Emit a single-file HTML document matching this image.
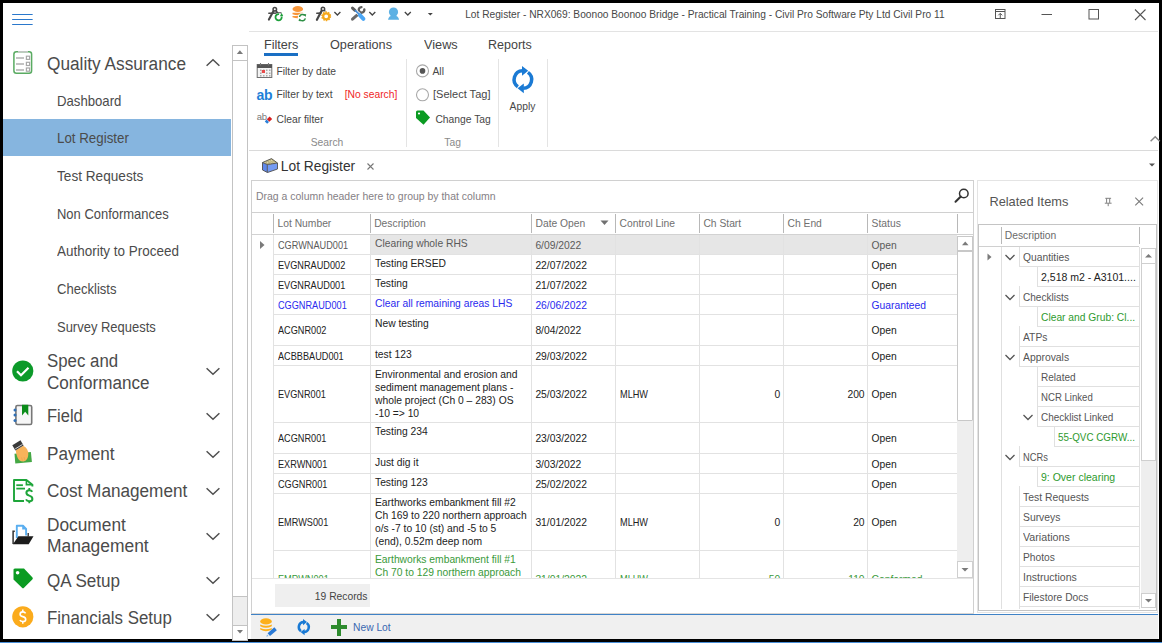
<!DOCTYPE html><html><head><meta charset="utf-8"><style>
*{box-sizing:border-box;margin:0;padding:0}
html,body{width:1162px;height:643px;overflow:hidden;background:#000;font-family:"Liberation Sans",sans-serif;position:relative}
.r{position:absolute;display:block}
.t{position:absolute;white-space:nowrap;line-height:1;}
.m{position:absolute;white-space:pre;}
</style></head><body>

<div class="r" style="left:3px;top:3px;width:1156px;height:636px;background:#fff;"></div>
<div class="r" style="left:0px;top:642px;width:1162px;height:1px;background:#4a90d9;"></div>
<div class="r" style="left:249px;top:31px;width:909px;height:1px;background:#e3e3e3;"></div>
<svg class="r" style="left:0px;top:0px;" width="1162" height="30" viewBox="0 0 1162 30">
<g stroke="#474747" fill="none" stroke-linecap="round">
<circle cx="274.8" cy="9.2" r="1.75" stroke-width="1.5"/>
<path d="M273.5 11 L268.9 19.6" stroke-width="2.1"/><path d="M276.2 11 L279.8 16.5" stroke-width="1.7"/><path d="M268.8 13.3 L281 13" stroke-width="1.4"/>
</g>
<circle cx="278.6" cy="17.2" r="4.3" fill="#fff"/>
<path d="M279.14 14.15 A3.1 3.1 0 1 0 281.59 16.4" stroke="#1ea03c" stroke-width="1.8" fill="none"/>
<path d="M279.9 16.2 L283.2 16 L281.7 13.1z" fill="#1ea03c"/>
<g fill="#f7963a"><ellipse cx="297.8" cy="9" rx="5.3" ry="3"/><path d="M292.5 12.8 H303.1 V14.3 Q297.8 16.3 292.5 14.3z"/><path d="M292.5 16 H303.1 V17.2 Q297.8 19.2 292.5 17.2z"/></g>
<circle cx="302.4" cy="17.6" r="4.6" fill="#fff"/>
<path d="M299.5 17 A3 3 0 0 1 304.8 15.6" stroke="#2d8f44" stroke-width="1.5" fill="none"/><path d="M305.3 18.4 A3 3 0 0 1 300 19.6" stroke="#2d8f44" stroke-width="1.5" fill="none"/>
<path d="M303.6 14 l2.6 0.3 l-0.6 2.6z" fill="#2d8f44"/><path d="M301.2 21.2 l-2.6 -0.3 l0.6 -2.6z" fill="#2d8f44"/>
<g stroke="#474747" fill="none" stroke-linecap="round">
<circle cx="323" cy="9" r="1.7" stroke-width="1.6"/>
<path d="M321.6 10.8 L316.9 19.8" stroke-width="2.2"/><path d="M324.5 10.8 L327 14" stroke-width="1.8"/><path d="M316.8 13.2 L321 13.1" stroke-width="1.6"/>
</g>
<circle cx="326.2" cy="16.3" r="5" fill="#fff"/>
<circle cx="326.2" cy="16.3" r="3" fill="none" stroke="#f5a81c" stroke-width="2.2"/>
<circle cx="326.2" cy="16.3" r="4.2" fill="none" stroke="#f5a81c" stroke-width="1.5" stroke-dasharray="1.5 1.14"/>
<path d="M334.4 12 l3 3 l3 -3" stroke="#444" stroke-width="1.3" fill="none"/>
<g stroke-linecap="round" fill="none">
<path d="M364.3 9.4 A2.8 2.8 0 1 1 361.4 7.1" stroke="#5e5e5e" stroke-width="2.4"/>
<path d="M360.2 12.4 L352.5 19.2" stroke="#6a6a6a" stroke-width="3"/>
<path d="M355.4 10.6 L360.2 15.2" stroke="#fff" stroke-width="3"/>
<path d="M352.5 8.1 L355 10.3" stroke="#5e5e5e" stroke-width="3"/>
<path d="M355.4 10.6 L359.6 14.6" stroke="#3f8ad8" stroke-width="1.5"/>
<path d="M359.9 15.1 L363.4 18.8" stroke="#4aa6f5" stroke-width="4"/>
</g>
<path d="M369.3 12 l3 3 l3 -3" stroke="#444" stroke-width="1.3" fill="none"/>
<circle cx="393.5" cy="12" r="4.6" fill="#5db1e4"/>
<path d="M388 19.8 Q388.5 15.5 393.5 15.5 Q398.5 15.5 399.1 19.8 Z" fill="#5db1e4"/>
<path d="M404.8 12 l3 3 l3 -3" stroke="#444" stroke-width="1.3" fill="none"/>
<path d="M427.8 12.9 h5 l-2.5 2.6z" fill="#444"/>
</svg>
<div class="t " style="left:465.20px;top:10.17px;font-size:10.2px;color:#474747;">Lot Register - NRX069: Boonoo Boonoo Bridge - Practical Training - Civil Pro Software Pty Ltd Civil Pro 11</div>
<svg class="r" style="left:990px;top:3px;" width="170" height="25" viewBox="0 0 170 25">
<rect x="5.5" y="6.5" width="9.5" height="9" fill="none" stroke="#555" stroke-width="1"/>
<path d="M5.5 8.5 h9.5" stroke="#555"/>
<path d="M10.25 15 v-4.5 M8.3 12.3 l1.95 -1.95 l1.95 1.95" stroke="#555" fill="none"/>
<path d="M51.5 11.5 h10.5" stroke="#555" stroke-width="1"/>
<rect x="99" y="6.5" width="9.5" height="9.5" fill="none" stroke="#555" stroke-width="1"/>
<path d="M145 6.5 l10.5 10.5 M155.5 6.5 l-10.5 10.5" stroke="#555" stroke-width="1.1"/>
</svg>
<svg class="r" style="left:10px;top:10px;" width="26" height="20" viewBox="0 0 26 20"><g stroke="#2a78cc" stroke-width="1.2" stroke-linecap="round"><path d="M2.6 4.5h19.6"/><path d="M2.6 9.5h19.6"/><path d="M2.6 14.5h19.6"/></g></svg>
<div class="r" style="left:3px;top:119px;width:228px;height:37px;background:#86b5df;"></div>
<div class="t " style="left:47.30px;top:55.80px;font-size:17.6px;color:#4b4b4b;transform:scaleX(0.9802);transform-origin:0 0;">Quality Assurance</div>
<div class="t " style="left:57.00px;top:94.40px;font-size:14.3px;color:#4b4b4b;transform:scaleX(0.9206);transform-origin:0 0;">Dashboard</div>
<div class="t " style="left:57.00px;top:131.20px;font-size:14.3px;color:#4b4b4b;transform:scaleX(0.9326);transform-origin:0 0;">Lot Register</div>
<div class="t " style="left:57.00px;top:169.00px;font-size:14.3px;color:#4b4b4b;transform:scaleX(0.9526);transform-origin:0 0;">Test Requests</div>
<div class="t " style="left:57.00px;top:206.60px;font-size:14.3px;color:#4b4b4b;transform:scaleX(0.9069);transform-origin:0 0;">Non Conformances</div>
<div class="t " style="left:57.00px;top:244.40px;font-size:14.3px;color:#4b4b4b;transform:scaleX(0.941);transform-origin:0 0;">Authority to Proceed</div>
<div class="t " style="left:57.00px;top:281.70px;font-size:14.3px;color:#4b4b4b;transform:scaleX(0.9132);transform-origin:0 0;">Checklists</div>
<div class="t " style="left:57.00px;top:320.30px;font-size:14.3px;color:#4b4b4b;transform:scaleX(0.9075);transform-origin:0 0;">Survey Requests</div>
<div class="t " style="left:47.30px;top:352.80px;font-size:17.6px;color:#4b4b4b;transform:scaleX(0.9562);transform-origin:0 0;">Spec and</div>
<div class="t " style="left:47.30px;top:374.50px;font-size:17.6px;color:#4b4b4b;transform:scaleX(0.9704);transform-origin:0 0;">Conformance</div>
<div class="t " style="left:47.30px;top:407.50px;font-size:17.6px;color:#4b4b4b;transform:scaleX(0.9386);transform-origin:0 0;">Field</div>
<div class="t " style="left:47.30px;top:446.10px;font-size:17.6px;color:#4b4b4b;transform:scaleX(0.9735);transform-origin:0 0;">Payment</div>
<div class="t " style="left:47.30px;top:483.00px;font-size:17.6px;color:#4b4b4b;transform:scaleX(0.9759);transform-origin:0 0;">Cost Management</div>
<div class="t " style="left:47.30px;top:517.40px;font-size:17.6px;color:#4b4b4b;transform:scaleX(0.9827);transform-origin:0 0;">Document</div>
<div class="t " style="left:47.30px;top:538.40px;font-size:17.6px;color:#4b4b4b;transform:scaleX(0.9902);transform-origin:0 0;">Management</div>
<div class="t " style="left:47.30px;top:572.60px;font-size:17.6px;color:#4b4b4b;transform:scaleX(0.9704);transform-origin:0 0;">QA Setup</div>
<div class="t " style="left:47.30px;top:609.90px;font-size:17.6px;color:#4b4b4b;transform:scaleX(0.9594);transform-origin:0 0;">Financials Setup</div>
<svg class="r" style="left:204px;top:56px;" width="20" height="12" viewBox="0 0 20 12"><path d="M2.6 9.8 l6.4 -6.1 l6.4 6.1" stroke="#505050" stroke-width="1.5" fill="none"/></svg>
<svg class="r" style="left:204px;top:365px;" width="20" height="12" viewBox="0 0 20 12"><path d="M2.6 3.2 l6.4 6.1 l6.4 -6.1" stroke="#505050" stroke-width="1.5" fill="none"/></svg>
<svg class="r" style="left:204px;top:410px;" width="20" height="12" viewBox="0 0 20 12"><path d="M2.6 3.2 l6.4 6.1 l6.4 -6.1" stroke="#505050" stroke-width="1.5" fill="none"/></svg>
<svg class="r" style="left:204px;top:448px;" width="20" height="12" viewBox="0 0 20 12"><path d="M2.6 3.2 l6.4 6.1 l6.4 -6.1" stroke="#505050" stroke-width="1.5" fill="none"/></svg>
<svg class="r" style="left:204px;top:485px;" width="20" height="12" viewBox="0 0 20 12"><path d="M2.6 3.2 l6.4 6.1 l6.4 -6.1" stroke="#505050" stroke-width="1.5" fill="none"/></svg>
<svg class="r" style="left:204px;top:530px;" width="20" height="12" viewBox="0 0 20 12"><path d="M2.6 3.2 l6.4 6.1 l6.4 -6.1" stroke="#505050" stroke-width="1.5" fill="none"/></svg>
<svg class="r" style="left:204px;top:574px;" width="20" height="12" viewBox="0 0 20 12"><path d="M2.6 3.2 l6.4 6.1 l6.4 -6.1" stroke="#505050" stroke-width="1.5" fill="none"/></svg>
<svg class="r" style="left:204px;top:611px;" width="20" height="12" viewBox="0 0 20 12"><path d="M2.6 3.2 l6.4 6.1 l6.4 -6.1" stroke="#505050" stroke-width="1.5" fill="none"/></svg>
<svg class="r" style="left:10px;top:48px;" width="26" height="30" viewBox="0 0 26 30"><rect x="3.9" y="3.8" width="17.7" height="21.5" rx="2.5" fill="#fff" stroke="#5aab62" stroke-width="1.5"/>
<path d="M8 3.8h10" stroke="#c8c8c8" stroke-width="1.5"/>
<g stroke="#bdbdbd" stroke-width="1.8"><path d="M6 10h8"/><path d="M6 16h8"/><path d="M6 22h8"/></g>
<g stroke="#a8a8a8" stroke-width="1.2" fill="#fff"><rect x="16.4" y="8.2" width="3.2" height="3.2"/><rect x="16.4" y="14.3" width="3.2" height="3.2"/><rect x="16.4" y="20" width="3.2" height="3.2"/></g></svg>
<svg class="r" style="left:10px;top:358px;" width="26" height="26" viewBox="0 0 26 26"><circle cx="12.8" cy="13" r="10.6" fill="#0c9a2a"/><path d="M7 13.3 l4 4 l7.5 -7.5" stroke="#fff" stroke-width="2.2" fill="none"/></svg>
<svg class="r" style="left:10px;top:402px;" width="26" height="26" viewBox="0 0 26 26"><rect x="5.9" y="3.5" width="15.8" height="19" rx="1.5" fill="#f6f6f6" stroke="#777" stroke-width="1.6"/>
<path d="M12 2.8 h6.3 v10.6 l-3.15 -3.6 l-3.15 3.6z" fill="#0b8c1a"/>
<g fill="#2f6fb5"><circle cx="5" cy="8" r="1.5"/><circle cx="5" cy="13" r="1.5"/><circle cx="5" cy="18.5" r="1.5"/></g></svg>
<svg class="r" style="left:10px;top:438px;" width="26" height="28" viewBox="0 0 26 28"><path d="M4.5 15.7 L20.9 13.9 L21.9 23.9 L5.3 25.5z" fill="#45a845"/>
<path d="M5.8 12.3 L13.2 7.8 Q18.5 10.5 18.3 16.5 Q18 22.5 13.5 23.4 Q9 23.5 7.5 19.5 Q6 16 5.8 12.3z" fill="#f7b35a"/>
<path d="M11.5 19.5 l1 3 M14 19 l1 3.5" stroke="#e8a048" stroke-width="0.6"/>
<path d="M2.3 7.3 L10.5 2.3 L13.6 7.6 L5.4 12.6z" fill="#3a3a3a"/>
<path d="M5.2 10.9 L12.6 6.4" stroke="#e6e6e6" stroke-width="0.9"/></svg>
<svg class="r" style="left:10px;top:476px;" width="26" height="28" viewBox="0 0 26 28"><path d="M14 25 H4 V4 H16.4 L22.4 8.8 V10.5" stroke="#1ea53a" stroke-width="1.9" fill="none" stroke-linejoin="round"/>
<path d="M16.4 4.5 V8.6 H22" stroke="#1ea53a" stroke-width="1.6" fill="none"/>
<g stroke="#1ea53a" stroke-width="1.8"><path d="M6.3 9.2h6.6"/><path d="M6.3 12.6h8.7"/></g>
<path d="M22.3 15.8 Q21.3 14.2 19.3 14.2 Q16.4 14.2 16.4 16.8 Q16.4 18.9 19.3 19.6 Q22.4 20.4 22.4 22.9 Q22.4 25.2 19.3 25.2 Q16.8 25.2 16 23.4" stroke="#1ea53a" stroke-width="2" fill="none"/>
<path d="M19.3 12 v2.4 M19.3 25 v2.2" stroke="#1ea53a" stroke-width="1.8"/></svg>
<svg class="r" style="left:8px;top:520px;" width="30" height="28" viewBox="0 0 30 28"><path d="M8.8 18 V5.7 H15 L18.1 8.8 V15.5" stroke="#5aaef0" stroke-width="1.9" fill="#fff" stroke-linejoin="round"/>
<path d="M15 5.7 V8.8 H18.1" stroke="#5aaef0" stroke-width="1.6" fill="#5aaef0"/>
<path d="M5.1 24 V11.2 H6.8" stroke="#333" stroke-width="1.5" fill="none"/>
<path d="M20.2 13 V16.5" stroke="#333" stroke-width="1.4"/>
<path d="M10.4 16.2 H25.5 L20.7 24.2 H4.9z" fill="#1c1c1c"/></svg>
<svg class="r" style="left:10px;top:566px;" width="26" height="26" viewBox="0 0 26 26"><path d="M3.5 4.5 Q3 2.5 5 2.5 H14 L22.5 11.5 Q23.3 12.5 22.3 13.5 L14 21.8 Q13 22.8 12 21.8 L3.5 13.5z" fill="#0b9b22"/>
<circle cx="7.6" cy="6.8" r="1.8" fill="#fff"/></svg>
<svg class="r" style="left:10px;top:604px;" width="26" height="26" viewBox="0 0 26 26"><circle cx="12.8" cy="12.8" r="10.6" fill="#fbab1c"/><path d="M15.6 9.4 Q14.8 7.9 12.8 7.9 Q10.1 7.9 10.1 10.2 Q10.1 12.1 12.8 12.6 Q15.7 13.2 15.7 15.4 Q15.7 17.5 12.8 17.5 Q10.6 17.5 9.9 16" stroke="#fff" stroke-width="1.6" fill="none"/><path d="M12.8 5.6 v2.3 M12.8 17.4 v2.3" stroke="#fff" stroke-width="1.5"/></svg>
<div class="r" style="left:232px;top:45px;width:16px;height:594px;background:#fff;border-left:1px solid #c3c3c3;border-right:1px solid #c3c3c3;"></div>
<div class="r" style="left:232px;top:45px;width:16px;height:16px;background:#fff;border:1px solid #c3c3c3;"></div>
<svg class="r" style="left:232px;top:45px;" width="16" height="16" viewBox="0 0 16 16"><path d="M4.8 9 h6.2 l-3.1 -3.7z" fill="#7a7a7a"/></svg>
<div class="r" style="left:232px;top:60px;width:16px;height:537px;background:#fff;border:1px solid #c3c3c3;"></div>
<div class="r" style="left:233px;top:597px;width:14px;height:28px;background:#eeeeee;"></div>
<div class="r" style="left:232px;top:625px;width:16px;height:16px;background:#fff;border:1px solid #c3c3c3;"></div>
<svg class="r" style="left:232px;top:625px;" width="16" height="14" viewBox="0 0 16 14"><path d="M5 5 h6 l-3 3.5z" fill="#7a7a7a"/></svg>
<div class="t " style="left:264.00px;top:38.40px;font-size:13.7px;color:#444;transform:scaleX(0.9231);transform-origin:0 0;">Filters</div>
<div class="r" style="left:264px;top:53px;width:34px;height:3px;background:#1a6fc4;"></div>
<div class="t " style="left:329.60px;top:38.40px;font-size:13.7px;color:#444;transform:scaleX(0.9258);transform-origin:0 0;">Operations</div>
<div class="t " style="left:423.50px;top:38.40px;font-size:13.7px;color:#444;transform:scaleX(0.9293);transform-origin:0 0;">Views</div>
<div class="t " style="left:488.20px;top:38.40px;font-size:13.7px;color:#444;transform:scaleX(0.9137);transform-origin:0 0;">Reports</div>
<div class="r" style="left:249px;top:150px;width:909px;height:1px;background:#dadada;"></div>
<div class="r" style="left:406px;top:59px;width:1px;height:88px;background:#e4e4e4;"></div>
<div class="r" style="left:498px;top:59px;width:1px;height:88px;background:#e4e4e4;"></div>
<div class="r" style="left:547px;top:59px;width:1px;height:88px;background:#e4e4e4;"></div>
<div class="t " style="left:276.50px;top:66.58px;font-size:10.3px;color:#474747;">Filter by date</div>
<div class="t " style="left:276.50px;top:90.48px;font-size:10.3px;color:#474747;">Filter by text</div>
<div class="t " style="left:344.70px;top:90.48px;font-size:10.3px;color:#f02626;">[No search]</div>
<div class="t " style="left:276.50px;top:114.58px;font-size:10.3px;color:#474747;">Clear filter</div>
<div class="t " style="left:177.00px;width:300px;top:137.78px;font-size:10.3px;color:#8a8a8a;text-align:center;">Search</div>
<div class="t " style="left:432.50px;top:66.58px;font-size:10.3px;color:#474747;">All</div>
<div class="t " style="left:432.50px;top:90.48px;font-size:10.3px;color:#474747;transform:scaleX(1.0723);transform-origin:0 0;">[Select Tag]</div>
<div class="t " style="left:435.40px;top:114.58px;font-size:10.3px;color:#474747;">Change Tag</div>
<div class="t " style="left:302.60px;width:300px;top:137.78px;font-size:10.3px;color:#8a8a8a;text-align:center;">Tag</div>
<div class="t " style="left:372.50px;width:300px;top:101.58px;font-size:10.3px;color:#474747;text-align:center;">Apply</div>
<svg class="r" style="left:256px;top:62px;" width="18" height="18" viewBox="0 0 18 18"><rect x="1.2" y="2.5" width="14.6" height="13" fill="#f3f3f3" stroke="#707070" stroke-width="1"/>
<rect x="1" y="2.5" width="15" height="3.5" fill="#555"/>
<g fill="#aaa"><rect x="4" y="7.5" width="1.5" height="1.5"/><rect x="7" y="7.5" width="1.5" height="1.5"/><rect x="10" y="7.5" width="1.5" height="1.5"/><rect x="13" y="7.5" width="1.5" height="1.5"/>
<rect x="4" y="10.5" width="1.5" height="1.5"/><rect x="10" y="10.5" width="1.5" height="1.5"/><rect x="13" y="10.5" width="1.5" height="1.5"/>
<rect x="4" y="13" width="1.5" height="1.5"/><rect x="7" y="13" width="1.5" height="1.5"/><rect x="10" y="13" width="1.5" height="1.5"/><rect x="13" y="13" width="1.5" height="1.5"/></g>
<rect x="5.8" y="8" width="3.2" height="3" fill="#e84a4a"/>
<g stroke="#777" stroke-width="1.1" fill="none"><path d="M4.5 1 v2.5"/><path d="M12.5 1 v2.5"/></g></svg>
<div class="t " style="left:256.50px;top:87.95px;font-size:14px;color:#1e7fd8;font-weight:bold;letter-spacing:-0.3px;">ab</div>
<div class="t " style="left:256.80px;top:111.96px;font-size:9.5px;color:#777;letter-spacing:-0.3px;">ab</div>
<svg class="r" style="left:262px;top:113px;" width="12" height="12" viewBox="0 0 12 12"><path d="M4.8 6.2 L7.6 3.4 L10.2 6 L7.4 8.8z" fill="#d61f1f"/><path d="M2.8 8.4 L4.6 6.6 L7 9 L5.2 10.8z" fill="#2a7fd8"/></svg>
<svg class="r" style="left:414px;top:62px;" width="18" height="70" viewBox="0 0 18 70"><circle cx="8.5" cy="8.9" r="6" fill="#fff" stroke="#a8a8a8" stroke-width="1.1"/><circle cx="8.5" cy="8.9" r="2.8" fill="#555"/>
<circle cx="8.5" cy="32.8" r="6" fill="#fff" stroke="#a8a8a8" stroke-width="1.1"/>
<path d="M2 50 Q2 48.5 3.5 48.5 H9.5 L16 55.5 L9.5 62.8 L2 56z" fill="#0b9b22"/><circle cx="5" cy="51.5" r="1.1" fill="#fff"/></svg>
<svg class="r" style="left:510px;top:64px;" width="26" height="32" viewBox="0 0 26 32"><g stroke="#1a7ad4" stroke-width="3.5" fill="none">
<path d="M7.88 22.77 A8.75 8.75 0 0 1 12.6 6.85"/><path d="M17.92 8.43 A8.75 8.75 0 0 1 13.2 24.35"/></g>
<path d="M12 2 L18.2 6.85 L12 11.7z" fill="#1a7ad4"/><path d="M13.8 19.5 L7.6 24.35 L13.8 29.2z" fill="#1a7ad4"/></svg>
<svg class="r" style="left:1148px;top:134px;" width="14" height="10" viewBox="0 0 14 10"><path d="M2.6 7.2 l4.6 -4.4 l4.6 4.4" stroke="#888" stroke-width="1.5" fill="none"/></svg>
<svg class="r" style="left:260px;top:155px;" width="20" height="20" viewBox="0 0 20 20"><path d="M2.5 7.5 L7.3 9.5 L7.5 17.5 L2.5 15z" fill="#6088ea"/>
<path d="M7.3 9.5 L17.5 8 L17.5 14 L7.5 17.5z" fill="#749bf3"/>
<path d="M2.5 7.5 L11.5 3.6 L17.5 8 L7.3 9.5z" fill="#d4ca94"/>
<g fill="#e8e0b0" stroke="#8a845e" stroke-width="0.5"><ellipse cx="7.6" cy="7.3" rx="1.3" ry="1"/><ellipse cx="11.6" cy="5.4" rx="1.3" ry="1"/><ellipse cx="14" cy="7.8" rx="1.3" ry="1"/><ellipse cx="10.3" cy="8.6" rx="1.2" ry="0.8"/></g>
<path d="M2.5 7.5 L11.5 3.6 L17.5 8 V14 L7.5 17.5 L2.5 15z M7.3 9.5 L17.5 8 M7.3 9.5 L2.5 7.5 M7.3 9.5 V17.5" stroke="#4e4e4e" stroke-width="0.9" fill="none" stroke-linejoin="round"/></svg>
<div class="t " style="left:280.80px;top:160.32px;font-size:13.8px;color:#333;">Lot Register</div>
<svg class="r" style="left:365px;top:162px;" width="12" height="10" viewBox="0 0 12 10"><path d="M2.5 1.5 l6 6 M8.5 1.5 l-6 6" stroke="#777" stroke-width="1.1"/></svg>
<svg class="r" style="left:1146px;top:160px;" width="12" height="10" viewBox="0 0 12 10"><path d="M3 3.5 h6 l-3 3z" fill="#555"/></svg>
<div class="r" style="left:251px;top:180px;width:723px;height:435px;background:#fff;border-left:1px solid #d0d0d0;border-top:1px solid #d0d0d0;border-right:1px solid #d0d0d0;"></div>
<div class="t " style="left:255.80px;top:192.08px;font-size:10.3px;color:#858085;transform:scaleX(1.0156);transform-origin:0 0;">Drag a column header here to group by that column</div>
<svg class="r" style="left:952px;top:186px;" width="20" height="20" viewBox="0 0 20 20"><circle cx="11.8" cy="7.5" r="4.3" stroke="#333" stroke-width="1.5" fill="none"/><path d="M8.8 10.5 L3.5 15.8" stroke="#333" stroke-width="2" stroke-linecap="round"/></svg>
<div class="r" style="left:252px;top:212px;width:721px;height:1px;background:#d0d0d0;"></div>
<div class="r" style="left:252px;top:234px;width:721px;height:1px;background:#d2d2d2;"></div>
<div class="r" style="left:273px;top:214px;width:1px;height:19px;background:#b8b8b8;"></div>
<div class="r" style="left:370px;top:214px;width:1px;height:19px;background:#b8b8b8;"></div>
<div class="r" style="left:531px;top:214px;width:1px;height:19px;background:#b8b8b8;"></div>
<div class="r" style="left:615px;top:214px;width:1px;height:19px;background:#b8b8b8;"></div>
<div class="r" style="left:699px;top:214px;width:1px;height:19px;background:#b8b8b8;"></div>
<div class="r" style="left:783px;top:214px;width:1px;height:19px;background:#b8b8b8;"></div>
<div class="r" style="left:867px;top:214px;width:1px;height:19px;background:#b8b8b8;"></div>
<div class="r" style="left:957px;top:214px;width:1px;height:19px;background:#b8b8b8;"></div>
<div class="t " style="left:277.50px;top:219.18px;font-size:10.3px;color:#707070;">Lot Number</div>
<div class="t " style="left:374.20px;top:219.18px;font-size:10.3px;color:#707070;">Description</div>
<div class="t " style="left:535.50px;top:219.18px;font-size:10.3px;color:#707070;">Date Open</div>
<svg class="r" style="left:598px;top:219px;" width="12" height="8" viewBox="0 0 12 8"><path d="M2.5 1.5 h8 l-4 4.5z" fill="#707070"/></svg>
<div class="t " style="left:619.50px;top:219.18px;font-size:10.3px;color:#707070;">Control Line</div>
<div class="t " style="left:703.40px;top:219.18px;font-size:10.3px;color:#707070;">Ch Start</div>
<div class="t " style="left:787.50px;top:219.18px;font-size:10.3px;color:#707070;">Ch End</div>
<div class="t " style="left:871.60px;top:219.18px;font-size:10.3px;color:#707070;">Status</div>
<div class="r" style="left:252px;top:235px;width:705px;height:343px;overflow:hidden">
<div class="r" style="left:118px;top:0px;width:587px;height:19px;background:#e6e6e6;"></div>
<div class="r" style="left:21px;top:19px;width:684px;height:1px;background:#e2e2e2;"></div>
<div class="t " style="left:25.60px;top:5.78px;font-size:10.3px;color:#5a5a5a;transform:scaleX(0.89);transform-origin:0 0;">CGRWNAUD001</div>
<div class="t " style="left:123.00px;top:3.58px;font-size:10.3px;color:#5a5a5a;">Clearing whole RHS</div>
<div class="t " style="left:283.40px;top:5.78px;font-size:10.3px;color:#5a5a5a;">6/09/2022</div>
<div class="t " style="left:619.60px;top:5.78px;font-size:10.3px;color:#5a5a5a;">Open</div>
<div class="r" style="left:21px;top:39px;width:684px;height:1px;background:#e2e2e2;"></div>
<div class="t " style="left:25.60px;top:25.78px;font-size:10.3px;color:#222;transform:scaleX(0.89);transform-origin:0 0;">EVGNRAUD002</div>
<div class="t " style="left:123.00px;top:23.58px;font-size:10.3px;color:#222;">Testing ERSED</div>
<div class="t " style="left:283.40px;top:25.78px;font-size:10.3px;color:#222;">22/07/2022</div>
<div class="t " style="left:619.60px;top:25.78px;font-size:10.3px;color:#222;">Open</div>
<div class="r" style="left:21px;top:59px;width:684px;height:1px;background:#e2e2e2;"></div>
<div class="t " style="left:25.60px;top:45.78px;font-size:10.3px;color:#222;transform:scaleX(0.89);transform-origin:0 0;">EVGNRAUD001</div>
<div class="t " style="left:123.00px;top:43.58px;font-size:10.3px;color:#222;">Testing</div>
<div class="t " style="left:283.40px;top:45.78px;font-size:10.3px;color:#222;">21/07/2022</div>
<div class="t " style="left:619.60px;top:45.78px;font-size:10.3px;color:#222;">Open</div>
<div class="r" style="left:21px;top:79px;width:684px;height:1px;background:#e2e2e2;"></div>
<div class="t " style="left:25.60px;top:65.78px;font-size:10.3px;color:#2a2aee;transform:scaleX(0.89);transform-origin:0 0;">CGGNRAUD001</div>
<div class="t " style="left:123.00px;top:63.58px;font-size:10.3px;color:#2a2aee;">Clear all remaining areas LHS</div>
<div class="t " style="left:283.40px;top:65.78px;font-size:10.3px;color:#2a2aee;">26/06/2022</div>
<div class="t " style="left:619.60px;top:65.78px;font-size:10.3px;color:#2a2aee;">Guaranteed</div>
<div class="r" style="left:21px;top:110px;width:684px;height:1px;background:#e2e2e2;"></div>
<div class="t " style="left:25.60px;top:91.28px;font-size:10.3px;color:#222;transform:scaleX(0.89);transform-origin:0 0;">ACGNR002</div>
<div class="t " style="left:123.00px;top:83.58px;font-size:10.3px;color:#222;">New testing</div>
<div class="t " style="left:283.40px;top:91.28px;font-size:10.3px;color:#222;">8/04/2022</div>
<div class="t " style="left:619.60px;top:91.28px;font-size:10.3px;color:#222;">Open</div>
<div class="r" style="left:21px;top:130px;width:684px;height:1px;background:#e2e2e2;"></div>
<div class="t " style="left:25.60px;top:116.78px;font-size:10.3px;color:#222;transform:scaleX(0.89);transform-origin:0 0;">ACBBBAUD001</div>
<div class="t " style="left:123.00px;top:114.58px;font-size:10.3px;color:#222;">test 123</div>
<div class="t " style="left:283.40px;top:116.78px;font-size:10.3px;color:#222;">29/03/2022</div>
<div class="t " style="left:619.60px;top:116.78px;font-size:10.3px;color:#222;">Open</div>
<div class="r" style="left:21px;top:187px;width:684px;height:1px;background:#e2e2e2;"></div>
<div class="t " style="left:25.60px;top:155.28px;font-size:10.3px;color:#222;transform:scaleX(0.89);transform-origin:0 0;">EVGNR001</div>
<div class="t " style="left:123.00px;top:134.58px;font-size:10.3px;color:#222;">Environmental and erosion and</div>
<div class="t " style="left:123.00px;top:147.58px;font-size:10.3px;color:#222;">sediment management plans -</div>
<div class="t " style="left:123.00px;top:160.58px;font-size:10.3px;color:#222;">whole project (Ch 0 – 283) OS</div>
<div class="t " style="left:123.00px;top:173.58px;font-size:10.3px;color:#222;">-10 =&gt; 10</div>
<div class="t " style="left:283.40px;top:155.28px;font-size:10.3px;color:#222;">25/03/2022</div>
<div class="t " style="left:367.50px;top:155.28px;font-size:10.3px;color:#222;transform:scaleX(0.89);transform-origin:0 0;">MLHW</div>
<div class="t " style="left:228.30px;width:300px;top:155.28px;font-size:10.3px;color:#222;text-align:right;">0</div>
<div class="t " style="left:312.60px;width:300px;top:155.28px;font-size:10.3px;color:#222;text-align:right;">200</div>
<div class="t " style="left:619.60px;top:155.28px;font-size:10.3px;color:#222;">Open</div>
<div class="r" style="left:21px;top:218px;width:684px;height:1px;background:#e2e2e2;"></div>
<div class="t " style="left:25.60px;top:199.28px;font-size:10.3px;color:#222;transform:scaleX(0.89);transform-origin:0 0;">ACGNR001</div>
<div class="t " style="left:123.00px;top:191.58px;font-size:10.3px;color:#222;">Testing 234</div>
<div class="t " style="left:283.40px;top:199.28px;font-size:10.3px;color:#222;">23/03/2022</div>
<div class="t " style="left:619.60px;top:199.28px;font-size:10.3px;color:#222;">Open</div>
<div class="r" style="left:21px;top:238px;width:684px;height:1px;background:#e2e2e2;"></div>
<div class="t " style="left:25.60px;top:224.78px;font-size:10.3px;color:#222;transform:scaleX(0.89);transform-origin:0 0;">EXRWN001</div>
<div class="t " style="left:123.00px;top:222.58px;font-size:10.3px;color:#222;">Just dig it</div>
<div class="t " style="left:283.40px;top:224.78px;font-size:10.3px;color:#222;">3/03/2022</div>
<div class="t " style="left:619.60px;top:224.78px;font-size:10.3px;color:#222;">Open</div>
<div class="r" style="left:21px;top:258px;width:684px;height:1px;background:#e2e2e2;"></div>
<div class="t " style="left:25.60px;top:244.78px;font-size:10.3px;color:#222;transform:scaleX(0.89);transform-origin:0 0;">CGGNR001</div>
<div class="t " style="left:123.00px;top:242.58px;font-size:10.3px;color:#222;">Testing 123</div>
<div class="t " style="left:283.40px;top:244.78px;font-size:10.3px;color:#222;">25/02/2022</div>
<div class="t " style="left:619.60px;top:244.78px;font-size:10.3px;color:#222;">Open</div>
<div class="r" style="left:21px;top:315px;width:684px;height:1px;background:#e2e2e2;"></div>
<div class="t " style="left:25.60px;top:283.28px;font-size:10.3px;color:#222;transform:scaleX(0.89);transform-origin:0 0;">EMRWS001</div>
<div class="t " style="left:123.00px;top:262.58px;font-size:10.3px;color:#222;">Earthworks embankment fill #2</div>
<div class="t " style="left:123.00px;top:275.58px;font-size:10.3px;color:#222;">Ch 169 to 220 northern approach</div>
<div class="t " style="left:123.00px;top:288.58px;font-size:10.3px;color:#222;">o/s -7 to 10 (st) and -5 to 5</div>
<div class="t " style="left:123.00px;top:301.58px;font-size:10.3px;color:#222;">(end), 0.52m deep nom</div>
<div class="t " style="left:283.40px;top:283.28px;font-size:10.3px;color:#222;">31/01/2022</div>
<div class="t " style="left:367.50px;top:283.28px;font-size:10.3px;color:#222;transform:scaleX(0.89);transform-origin:0 0;">MLHW</div>
<div class="t " style="left:228.30px;width:300px;top:283.28px;font-size:10.3px;color:#222;text-align:right;">0</div>
<div class="t " style="left:312.60px;width:300px;top:283.28px;font-size:10.3px;color:#222;text-align:right;">20</div>
<div class="t " style="left:619.60px;top:283.28px;font-size:10.3px;color:#222;">Open</div>
<div class="r" style="left:21px;top:372px;width:684px;height:1px;background:#e2e2e2;"></div>
<div class="t " style="left:25.60px;top:340.28px;font-size:10.3px;color:#3a9a3a;transform:scaleX(0.89);transform-origin:0 0;">EMRWN001</div>
<div class="t " style="left:123.00px;top:319.58px;font-size:10.3px;color:#3a9a3a;">Earthworks embankment fill #1</div>
<div class="t " style="left:123.00px;top:332.58px;font-size:10.3px;color:#3a9a3a;">Ch 70 to 129 northern approach</div>
<div class="t " style="left:123.00px;top:345.58px;font-size:10.3px;color:#3a9a3a;">x</div>
<div class="t " style="left:123.00px;top:358.58px;font-size:10.3px;color:#3a9a3a;">x</div>
<div class="t " style="left:283.40px;top:340.28px;font-size:10.3px;color:#3a9a3a;">31/01/2022</div>
<div class="t " style="left:367.50px;top:340.28px;font-size:10.3px;color:#3a9a3a;transform:scaleX(0.89);transform-origin:0 0;">MLHW</div>
<div class="t " style="left:228.30px;width:300px;top:340.28px;font-size:10.3px;color:#3a9a3a;text-align:right;">50</div>
<div class="t " style="left:312.60px;width:300px;top:340.28px;font-size:10.3px;color:#3a9a3a;text-align:right;">110</div>
<div class="t " style="left:619.60px;top:340.28px;font-size:10.3px;color:#3a9a3a;">Conformed</div>
<div class="r" style="left:21px;top:0px;width:1px;height:343px;background:#e2e2e2;"></div>
<div class="r" style="left:118px;top:0px;width:1px;height:343px;background:#e2e2e2;"></div>
<div class="r" style="left:279px;top:0px;width:1px;height:343px;background:#e2e2e2;"></div>
<div class="r" style="left:363px;top:0px;width:1px;height:343px;background:#e2e2e2;"></div>
<div class="r" style="left:447px;top:0px;width:1px;height:343px;background:#e2e2e2;"></div>
<div class="r" style="left:531px;top:0px;width:1px;height:343px;background:#e2e2e2;"></div>
<div class="r" style="left:615px;top:0px;width:1px;height:343px;background:#e2e2e2;"></div>
<svg class="r" style="left:6px;top:4px;" width="10" height="12" viewBox="0 0 10 12"><path d="M2 2 l4.5 4 l-4.5 4z" fill="#7a7a7a"/></svg>
</div>
<div class="r" style="left:957px;top:236px;width:16px;height:342px;background:#eeeeee;"></div>
<div class="r" style="left:957px;top:236px;width:16px;height:185px;background:#fff;border:1px solid #c8c8c8;border-radius:1px;"></div>
<div class="r" style="left:957px;top:236px;width:16px;height:16px;background:#fff;border:1px solid #c8c8c8;border-bottom:2px solid #c8c8c8;"></div>
<svg class="r" style="left:957px;top:236px;" width="16" height="17" viewBox="0 0 16 17"><path d="M5 9.2 h6.5 l-3.25 -3.6z" fill="#7a7a7a"/></svg>
<div class="r" style="left:957px;top:561px;width:16px;height:17px;background:#fff;border:1px solid #cfcfcf;"></div>
<svg class="r" style="left:957px;top:561px;" width="16" height="17" viewBox="0 0 16 17"><path d="M4.5 7 h7 l-3.5 3.5z" fill="#7a7a7a"/></svg>
<div class="r" style="left:252px;top:578px;width:721px;height:1px;background:#e4e4e4;"></div>
<div class="r" style="left:275px;top:584px;width:95px;height:23px;background:#efefef;"></div>
<div class="t " style="left:67.50px;width:300px;top:591.68px;font-size:10.3px;color:#444;text-align:right;">19 Records</div>
<div class="r" style="left:977px;top:180px;width:181px;height:433px;background:#fff;border:1px solid #e4e4e4;"></div>
<div class="t " style="left:989.40px;top:196.46px;font-size:12.8px;color:#555;">Related Items</div>
<svg class="r" style="left:1100px;top:194px;" width="16" height="16" viewBox="0 0 16 16"><path d="M5.3 4.3 h5.8 M6.6 4.3 v4.6 M9.7 4.3 v4.6 M4.8 9.2 h6.8 M8.2 9.2 v3" stroke="#808080" stroke-width="1" fill="none"/></svg>
<svg class="r" style="left:1132px;top:196px;" width="14" height="12" viewBox="0 0 14 12"><path d="M3.3 1.6 l7.8 7.8 M11.1 1.6 l-7.8 7.8" stroke="#7a7a7a" stroke-width="1.1"/></svg>
<div class="r" style="left:978px;top:224px;width:179px;height:387px;background:#fff;border:1px solid #c4c4c4;"></div>
<div class="r" style="left:979px;top:246px;width:160px;height:1px;background:#d0d0d0;"></div>
<div class="r" style="left:1001px;top:227px;width:1px;height:17px;background:#b8b8b8;"></div>
<div class="r" style="left:1139px;top:227px;width:1px;height:17px;background:#b8b8b8;"></div>
<div class="t " style="left:1004.80px;top:231.38px;font-size:10.3px;color:#6a6a6a;">Description</div>
<div class="r" style="left:979px;top:247px;width:162px;height:362px;overflow:hidden">
<div class="r" style="left:22px;top:0px;width:1px;height:362px;background:#e0e0e0;"></div>
<div class="r" style="left:40px;top:-1px;width:1px;height:20px;background:#e0e0e0;"></div>
<div class="r" style="left:40px;top:19px;width:120px;height:1px;background:#e0e0e0;"></div>
<div class="t " style="left:44.00px;top:5.58px;font-size:10.3px;color:#555;transform:scaleX(0.9984);transform-origin:0 0;">Quantities</div>
<svg class="r" style="left:25px;top:5px;" width="12" height="10" viewBox="0 0 12 10"><path d="M1.5 3 l4.5 4.5 l4.5 -4.5" stroke="#555" stroke-width="1.3" fill="none"/></svg>
<div class="r" style="left:58px;top:19px;width:1px;height:20px;background:#e0e0e0;"></div>
<div class="r" style="left:58px;top:39px;width:102px;height:1px;background:#e0e0e0;"></div>
<div class="t " style="left:62.00px;top:25.58px;font-size:10.3px;color:#222;transform:scaleX(1.0223);transform-origin:0 0;">2,518 m2 - A3101....</div>
<div class="r" style="left:40px;top:39px;width:1px;height:20px;background:#e0e0e0;"></div>
<div class="r" style="left:40px;top:59px;width:120px;height:1px;background:#e0e0e0;"></div>
<div class="t " style="left:44.00px;top:45.58px;font-size:10.3px;color:#555;transform:scaleX(0.9761);transform-origin:0 0;">Checklists</div>
<svg class="r" style="left:25px;top:45px;" width="12" height="10" viewBox="0 0 12 10"><path d="M1.5 3 l4.5 4.5 l4.5 -4.5" stroke="#555" stroke-width="1.3" fill="none"/></svg>
<div class="r" style="left:58px;top:59px;width:1px;height:20px;background:#e0e0e0;"></div>
<div class="r" style="left:58px;top:79px;width:102px;height:1px;background:#e0e0e0;"></div>
<div class="t " style="left:62.00px;top:65.58px;font-size:10.3px;color:#2e9a2e;transform:scaleX(0.9964);transform-origin:0 0;">Clear and Grub: Cl...</div>
<div class="r" style="left:40px;top:79px;width:1px;height:20px;background:#e0e0e0;"></div>
<div class="r" style="left:40px;top:99px;width:120px;height:1px;background:#e0e0e0;"></div>
<div class="t " style="left:44.00px;top:85.58px;font-size:10.3px;color:#555;transform:scaleX(0.9991);transform-origin:0 0;">ATPs</div>
<div class="r" style="left:40px;top:99px;width:1px;height:20px;background:#e0e0e0;"></div>
<div class="r" style="left:40px;top:119px;width:120px;height:1px;background:#e0e0e0;"></div>
<div class="t " style="left:44.00px;top:105.58px;font-size:10.3px;color:#555;transform:scaleX(1.0066);transform-origin:0 0;">Approvals</div>
<svg class="r" style="left:25px;top:105px;" width="12" height="10" viewBox="0 0 12 10"><path d="M1.5 3 l4.5 4.5 l4.5 -4.5" stroke="#555" stroke-width="1.3" fill="none"/></svg>
<div class="r" style="left:58px;top:119px;width:1px;height:20px;background:#e0e0e0;"></div>
<div class="r" style="left:58px;top:139px;width:102px;height:1px;background:#e0e0e0;"></div>
<div class="t " style="left:62.00px;top:125.58px;font-size:10.3px;color:#555;transform:scaleX(0.9746);transform-origin:0 0;">Related</div>
<div class="r" style="left:58px;top:139px;width:1px;height:20px;background:#e0e0e0;"></div>
<div class="r" style="left:58px;top:159px;width:102px;height:1px;background:#e0e0e0;"></div>
<div class="t " style="left:62.00px;top:145.58px;font-size:10.3px;color:#555;transform:scaleX(0.9331);transform-origin:0 0;">NCR Linked</div>
<div class="r" style="left:58px;top:159px;width:1px;height:20px;background:#e0e0e0;"></div>
<div class="r" style="left:58px;top:179px;width:102px;height:1px;background:#e0e0e0;"></div>
<div class="t " style="left:62.00px;top:165.58px;font-size:10.3px;color:#555;transform:scaleX(0.9655);transform-origin:0 0;">Checklist Linked</div>
<svg class="r" style="left:43px;top:165px;" width="12" height="10" viewBox="0 0 12 10"><path d="M1.5 3 l4.5 4.5 l4.5 -4.5" stroke="#555" stroke-width="1.3" fill="none"/></svg>
<div class="r" style="left:75px;top:179px;width:1px;height:20px;background:#e0e0e0;"></div>
<div class="r" style="left:75px;top:199px;width:85px;height:1px;background:#e0e0e0;"></div>
<div class="t " style="left:79.00px;top:185.58px;font-size:10.3px;color:#2e9a2e;transform:scaleX(0.9553);transform-origin:0 0;">55-QVC CGRW...</div>
<div class="r" style="left:40px;top:199px;width:1px;height:20px;background:#e0e0e0;"></div>
<div class="r" style="left:40px;top:219px;width:120px;height:1px;background:#e0e0e0;"></div>
<div class="t " style="left:44.00px;top:205.58px;font-size:10.3px;color:#555;transform:scaleX(0.9065);transform-origin:0 0;">NCRs</div>
<svg class="r" style="left:25px;top:205px;" width="12" height="10" viewBox="0 0 12 10"><path d="M1.5 3 l4.5 4.5 l4.5 -4.5" stroke="#555" stroke-width="1.3" fill="none"/></svg>
<div class="r" style="left:58px;top:219px;width:1px;height:20px;background:#e0e0e0;"></div>
<div class="r" style="left:58px;top:239px;width:102px;height:1px;background:#e0e0e0;"></div>
<div class="t " style="left:62.00px;top:225.58px;font-size:10.3px;color:#2e9a2e;transform:scaleX(1.0208);transform-origin:0 0;">9: Over clearing</div>
<div class="r" style="left:40px;top:239px;width:1px;height:20px;background:#e0e0e0;"></div>
<div class="r" style="left:40px;top:259px;width:120px;height:1px;background:#e0e0e0;"></div>
<div class="t " style="left:44.00px;top:245.58px;font-size:10.3px;color:#555;transform:scaleX(1.0115);transform-origin:0 0;">Test Requests</div>
<div class="r" style="left:40px;top:259px;width:1px;height:20px;background:#e0e0e0;"></div>
<div class="r" style="left:40px;top:279px;width:120px;height:1px;background:#e0e0e0;"></div>
<div class="t " style="left:44.00px;top:265.58px;font-size:10.3px;color:#555;transform:scaleX(1.0053);transform-origin:0 0;">Surveys</div>
<div class="r" style="left:40px;top:279px;width:1px;height:20px;background:#e0e0e0;"></div>
<div class="r" style="left:40px;top:299px;width:120px;height:1px;background:#e0e0e0;"></div>
<div class="t " style="left:44.00px;top:285.58px;font-size:10.3px;color:#555;transform:scaleX(1.0393);transform-origin:0 0;">Variations</div>
<div class="r" style="left:40px;top:299px;width:1px;height:20px;background:#e0e0e0;"></div>
<div class="r" style="left:40px;top:319px;width:120px;height:1px;background:#e0e0e0;"></div>
<div class="t " style="left:44.00px;top:305.58px;font-size:10.3px;color:#555;transform:scaleX(0.9949);transform-origin:0 0;">Photos</div>
<div class="r" style="left:40px;top:319px;width:1px;height:20px;background:#e0e0e0;"></div>
<div class="r" style="left:40px;top:339px;width:120px;height:1px;background:#e0e0e0;"></div>
<div class="t " style="left:44.00px;top:325.58px;font-size:10.3px;color:#555;transform:scaleX(1.0217);transform-origin:0 0;">Instructions</div>
<div class="r" style="left:40px;top:339px;width:1px;height:20px;background:#e0e0e0;"></div>
<div class="r" style="left:40px;top:359px;width:120px;height:1px;background:#e0e0e0;"></div>
<div class="t " style="left:44.00px;top:345.58px;font-size:10.3px;color:#555;transform:scaleX(0.9953);transform-origin:0 0;">Filestore Docs</div>
<div class="r" style="left:40px;top:359px;width:1px;height:20px;background:#e0e0e0;"></div>
<div class="r" style="left:40px;top:379px;width:120px;height:1px;background:#e0e0e0;"></div>
<div class="r" style="left:160px;top:0px;width:1px;height:362px;background:#e0e0e0;"></div>
<svg class="r" style="left:7px;top:5px;" width="8" height="10" viewBox="0 0 8 10"><path d="M1.5 1.5 l4 3.5 l-4 3.5z" fill="#7a7a7a"/></svg>
</div>
<div class="r" style="left:1141px;top:248px;width:15px;height:360px;background:#eeeeee;"></div>
<div class="r" style="left:1141px;top:248px;width:15px;height:213px;background:#fff;border:1px solid #cfcfcf;"></div>
<div class="r" style="left:1141px;top:248px;width:15px;height:16px;background:#fff;border:1px solid #cfcfcf;"></div>
<svg class="r" style="left:1141px;top:248px;" width="15" height="16" viewBox="0 0 15 16"><path d="M4 9.5 h7 l-3.5 -3.5z" fill="#7a7a7a"/></svg>
<div class="r" style="left:1141px;top:593px;width:15px;height:15px;background:#fff;border:1px solid #cfcfcf;"></div>
<svg class="r" style="left:1141px;top:593px;" width="15" height="15" viewBox="0 0 15 15"><path d="M4 6 h7 l-3.5 3.5z" fill="#7a7a7a"/></svg>
<div class="r" style="left:251px;top:613px;width:723px;height:1px;background:#d9d6d3;"></div>
<div class="r" style="left:251px;top:614px;width:907px;height:1px;background:#3f82c6;"></div>
<div class="r" style="left:251px;top:615px;width:907px;height:24px;background:#f0f0f0;"></div>
<svg class="r" style="left:255px;top:615px;" width="60" height="24" viewBox="0 0 60 24"><g fill="#fdb01a"><ellipse cx="11" cy="6.4" rx="5.8" ry="3.1"/>
<path d="M5.2 9.6 Q11 12 16.8 9.6 V11.2 Q11 14.2 5.2 11.2z"/><path d="M5.2 12.9 Q11 15.5 16.8 12.9 V14.6 Q11 18 5.2 14.6z"/></g>
<path d="M20.6 13.8 L13.8 19.6" stroke="#2a7ad6" stroke-width="3.8"/><path d="M12 19.5 l1.5 1.5 l-2.2 0.7z" fill="#7ab0e8"/>
<g stroke="#1a7ad4" stroke-width="2.5" fill="none"><path d="M45.93 16.2 A5 5 0 0 1 48.6 7.1"/><path d="M51.67 8 A5 5 0 0 1 49 17.1"/></g>
<path d="M48 4 L52 7.1 L48 10.2z" fill="#1a7ad4"/><path d="M49.6 14 L45.6 17.1 L49.6 20.2z" fill="#1a7ad4"/></svg>
<div class="r" style="left:336.8px;top:618.7px;width:4.5px;height:17px;background:#2e8b2e;"></div>
<div class="r" style="left:330.7px;top:624.8px;width:16.8px;height:4.5px;background:#2e8b2e;"></div>
<div class="t " style="left:352.60px;top:623.18px;font-size:10.3px;color:#3a68b0;transform:scaleX(0.9978);transform-origin:0 0;">New Lot</div>
</body></html>
